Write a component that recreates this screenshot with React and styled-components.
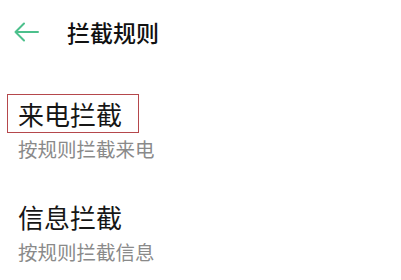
import styled, { createGlobalStyle } from "styled-components";

const GlobalStyle = createGlobalStyle`
  body {
    margin: 0;
    background: #ffffff;
    font-family: "Noto Sans CJK SC", "Noto Sans", sans-serif;
  }
`;

const items = [
  { title: "来电拦截", desc: "按规则拦截来电", marked: true },
  { title: "信息拦截", desc: "按规则拦截信息", marked: false },
];

const BackArrow = () => (
  <svg width="25" height="20" viewBox="0 0 25 20">
    <path
      d="M1.5 10 H24 M1.5 10 L10 1.5 M1.5 10 L10 18.5"
      stroke="#4cc08c"
      strokeWidth="2"
      fill="none"
      strokeLinecap="round"
    />
  </svg>
);

const App = () => {
  return (
    <Page>
      <GlobalStyle />
      <Header>
        <BackButton>
          <BackArrow />
        </BackButton>
        <Title>拦截规则</Title>
      </Header>

      {items.map((item) => (
        <Item key={item.title}>
          <ItemTitle $marked={item.marked}>{item.title}</ItemTitle>
          <ItemDesc>{item.desc}</ItemDesc>
        </Item>
      ))}
    </Page>
  );
};

export default App;

const Page = styled.div`
  width: 401px;
  height: 280px;
  overflow: hidden;
  background: #ffffff;
`;

const Header = styled.div`
  height: 64px;
  display: flex;
  align-items: center;
  padding-left: 14px;
`;

const BackButton = styled.div`
  width: 25px;
  height: 20px;
  display: flex;
  margin-top: -1px;
`;

const Title = styled.div`
  margin-left: 28px;
  font-size: 23px;
  font-weight: 500;
  line-height: 30px;
  color: #111111;
`;

const Item = styled.div`
  padding: 30px 0 6px 7px;
  display: flex;
  flex-direction: column;
  align-items: flex-start;
`;

const ItemTitle = styled.div`
  box-sizing: border-box;
  height: 39px;
  padding: 0 16px 0 10px;
  border: 1px solid ${(p) => (p.$marked ? "#b5484c" : "transparent")};
  font-size: 26px;
  line-height: 37px;
  color: #161616;
`;

const ItemDesc = styled.div`
  margin-top: 4px;
  padding-left: 11px;
  font-size: 19.5px;
  line-height: 24px;
  color: #8a8a8a;
`;
